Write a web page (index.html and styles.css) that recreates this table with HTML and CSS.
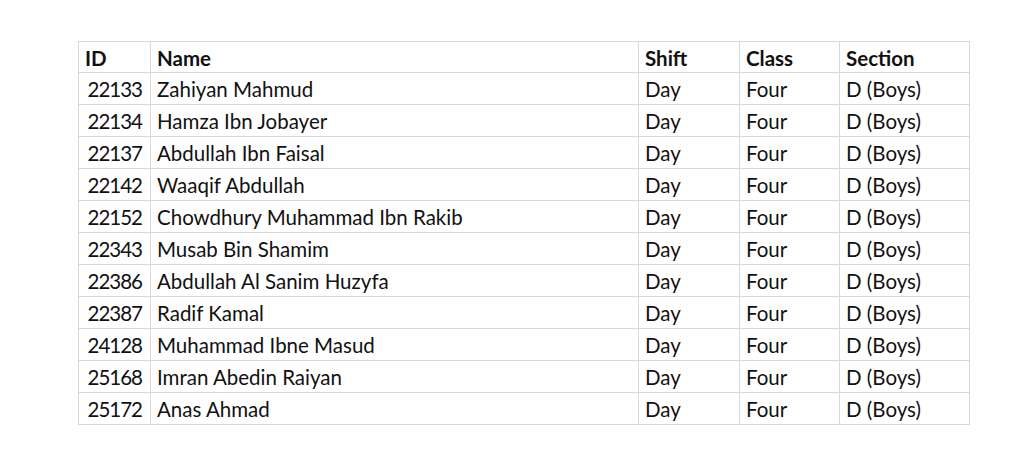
FILE: index.html
```html
<!DOCTYPE html>
<html>
<head>
<meta charset="utf-8">
<link rel="stylesheet" href="styles.css">
</head>
<body>
<div class="page">
<table class="roster">
<colgroup>
<col class="c-id"><col class="c-name"><col class="c-shift"><col class="c-class"><col class="c-section">
</colgroup>
<thead>
<tr><th class="id">ID</th><th>Name</th><th>Shift</th><th>Class</th><th>Section</th></tr>
</thead>
<tbody>
<tr><td class="num">22133</td><td>Zahiyan Mahmud</td><td>Day</td><td>Four</td><td>D (Boys)</td></tr>
<tr><td class="num">22134</td><td>Hamza Ibn Jobayer</td><td>Day</td><td>Four</td><td>D (Boys)</td></tr>
<tr><td class="num">22137</td><td>Abdullah Ibn Faisal</td><td>Day</td><td>Four</td><td>D (Boys)</td></tr>
<tr><td class="num">22142</td><td>Waaqif Abdullah</td><td>Day</td><td>Four</td><td>D (Boys)</td></tr>
<tr><td class="num">22152</td><td>Chowdhury Muhammad Ibn Rakib</td><td>Day</td><td>Four</td><td>D (Boys)</td></tr>
<tr><td class="num">22343</td><td>Musab Bin Shamim</td><td>Day</td><td>Four</td><td>D (Boys)</td></tr>
<tr><td class="num">22386</td><td>Abdullah Al Sanim Huzyfa</td><td>Day</td><td>Four</td><td>D (Boys)</td></tr>
<tr><td class="num">22387</td><td>Radif Kamal</td><td>Day</td><td>Four</td><td>D (Boys)</td></tr>
<tr><td class="num">24128</td><td>Muhammad Ibne Masud</td><td>Day</td><td>Four</td><td>D (Boys)</td></tr>
<tr><td class="num">25168</td><td>Imran Abedin Raiyan</td><td>Day</td><td>Four</td><td>D (Boys)</td></tr>
<tr><td class="num">25172</td><td>Anas Ahmad</td><td>Day</td><td>Four</td><td>D (Boys)</td></tr>
</tbody>
</table>
</div>
</body>
</html>
```
FILE: styles.css
```css
html, body {
  margin: 0;
  padding: 0;
  background: #ffffff;
}
.page {
  padding: 41px 0 0 78px;
}
.roster {
  border-collapse: collapse;
  table-layout: fixed;
  width: 891px;
  font-family: Lato, "Open Sans", sans-serif;
  font-size: 20.5px;
  color: #111111;
}
.c-id { width: 72px; }
.c-name { width: 488px; }
.c-shift { width: 101px; }
.c-class { width: 100px; }
.c-section { width: 130px; }
.roster th, .roster td {
  border: 1.5px solid #d9d9d9;
  height: 32px;
  padding: 1px 6px 0;
  box-sizing: border-box;
  text-align: left;
  vertical-align: middle;
  white-space: nowrap;
}
.roster th {
  font-weight: 700;
  height: 31px;
}
.roster td.num {
  text-align: right;
  padding-right: 8px;
  letter-spacing: -1px;
}
```
